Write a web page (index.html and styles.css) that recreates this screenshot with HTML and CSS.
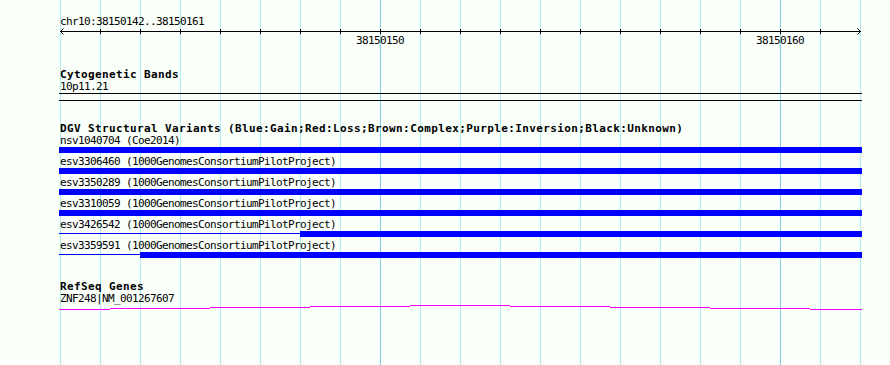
FILE: index.html
```html
<!DOCTYPE html>
<html>
<head>
<meta charset="utf-8">
<link rel="stylesheet" href="styles.css">
</head>
<body>
<div class="panel">
  <div class="label seg-label">chr10:38150142..38150161</div>
  <svg class="ruler" width="803" height="18" viewBox="59 28 803 18">
    <rect class="ink" x="60" y="31" width="801" height="1"/>
    <g class="ink">
      <rect x="100" y="29" width="1" height="5"/><rect x="140" y="29" width="1" height="5"/>
      <rect x="180" y="29" width="1" height="5"/><rect x="220" y="29" width="1" height="5"/>
      <rect x="260" y="29" width="1" height="5"/><rect x="300" y="29" width="1" height="5"/>
      <rect x="340" y="29" width="1" height="5"/><rect x="380" y="29" width="1" height="5"/>
      <rect x="420" y="29" width="1" height="5"/><rect x="460" y="29" width="1" height="5"/>
      <rect x="500" y="29" width="1" height="5"/><rect x="540" y="29" width="1" height="5"/>
      <rect x="580" y="29" width="1" height="5"/><rect x="620" y="29" width="1" height="5"/>
      <rect x="660" y="29" width="1" height="5"/><rect x="700" y="29" width="1" height="5"/>
      <rect x="740" y="29" width="1" height="5"/><rect x="780" y="29" width="1" height="5"/>
      <rect x="820" y="29" width="1" height="5"/>
    </g>
    <polyline class="arrow" points="63.5,28.5 60.5,31.5 63.5,34.5"/>
    <polyline class="arrow" points="857.5,28.5 860.5,31.5 857.5,34.5"/>
    <text class="tick-label" x="380" y="44">38150150</text>
    <text class="tick-label" x="780" y="44">38150160</text>
  </svg>

  <section class="track cyto">
    <div class="track-title">Cytogenetic Bands</div>
    <div class="label">10p11.21</div>
    <div class="band"></div>
  </section>

  <section class="track dgv">
    <div class="track-title">DGV Structural Variants (Blue:Gain;Red:Loss;Brown:Complex;Purple:Inversion;Black:Unknown)</div>
    <div class="sv">
      <div class="label">nsv1040704 (Coe2014)</div>
      <div class="sv-bar"><span class="thick"></span></div>
    </div>
    <div class="sv">
      <div class="label">esv3306460 (1000GenomesConsortiumPilotProject)</div>
      <div class="sv-bar"><span class="thick"></span></div>
    </div>
    <div class="sv">
      <div class="label">esv3350289 (1000GenomesConsortiumPilotProject)</div>
      <div class="sv-bar"><span class="thick"></span></div>
    </div>
    <div class="sv">
      <div class="label">esv3310059 (1000GenomesConsortiumPilotProject)</div>
      <div class="sv-bar"><span class="thick"></span></div>
    </div>
    <div class="sv">
      <div class="label">esv3426542 (1000GenomesConsortiumPilotProject)</div>
      <div class="sv-bar"><span class="thin" style="width:241px"></span><span class="thick"></span></div>
    </div>
    <div class="sv">
      <div class="label">esv3359591 (1000GenomesConsortiumPilotProject)</div>
      <div class="sv-bar"><span class="thin" style="width:81px"></span><span class="thick"></span></div>
    </div>
  </section>

  <section class="track refseq">
    <div class="track-title">RefSeq Genes</div>
    <div class="label">ZNF248|NM_001267607</div>
    <svg class="gene" width="803" height="5" viewBox="59 305 803 5">
      <g class="intron">
        <rect x="59" y="309" width="51" height="1"/>
        <rect x="110" y="308" width="100" height="1"/>
        <rect x="210" y="307" width="100" height="1"/>
        <rect x="310" y="306" width="100" height="1"/>
        <rect x="410" y="305" width="100" height="1"/>
        <rect x="510" y="306" width="100" height="1"/>
        <rect x="610" y="307" width="100" height="1"/>
        <rect x="710" y="308" width="100" height="1"/>
        <rect x="810" y="309" width="52" height="1"/>
      </g>
    </svg>
  </section>
</div>
</body>
</html>
```

FILE: styles.css
```css
html, body {
  margin: 0;
  padding: 0;
}

body {
  width: 890px;
  height: 365px;
  overflow: hidden;
  background-color: #fafffa;
  background-image:
    repeating-linear-gradient(to right, #87ceeb 0 1px, transparent 1px 400px),
    repeating-linear-gradient(to right, #afeeee 0 1px, transparent 1px 40px);
  background-repeat: no-repeat, no-repeat;
  background-position: 380px 0, 60px 0;
  background-size: 401px 100%, 801px 100%;
  color: #000;
  font-family: "DejaVu Sans Mono", "Liberation Mono", monospace;
  font-size: 11px;
}

.panel {
  display: flex;
  flex-direction: column;
  width: 803px;
  padding: 15px 0 0 59px;
}

.label {
  padding-left: 1px;
  line-height: 13px;
  height: 13px;
  letter-spacing: -0.62px;
  white-space: pre;
}

.ruler,
.gene {
  display: block;
}

.ruler .ink {
  fill: #000;
}

.ruler .arrow {
  fill: none;
  stroke: #000;
  stroke-width: 1;
}

.tick-label {
  font-family: "DejaVu Sans Mono", "Liberation Mono", monospace;
  font-size: 11px;
  letter-spacing: -0.62px;
  text-anchor: middle;
  fill: #000;
}

.track {
  display: flex;
  flex-direction: column;
  margin-top: 22px;
}

.track.dgv {
  margin-top: 21px;
}

.track-title {
  padding-left: 1px;
  font-weight: bold;
  line-height: 13px;
  height: 12px;
  letter-spacing: 0.38px;
  white-space: pre;
}

.band {
  height: 6px;
  border-top: 1px solid #000;
  border-bottom: 1px solid #000;
}

.sv {
  display: flex;
  flex-direction: column;
}

.sv + .sv {
  margin-top: 2px;
}

.sv-bar {
  display: flex;
  height: 6px;
}

.sv-bar .thin {
  height: 1px;
  margin-top: 2px;
  background: #0000ff;
}

.sv-bar .thick {
  flex: 1;
  background: #0000ff;
}

.gene .intron {
  fill: #ff00ff;
}
```
